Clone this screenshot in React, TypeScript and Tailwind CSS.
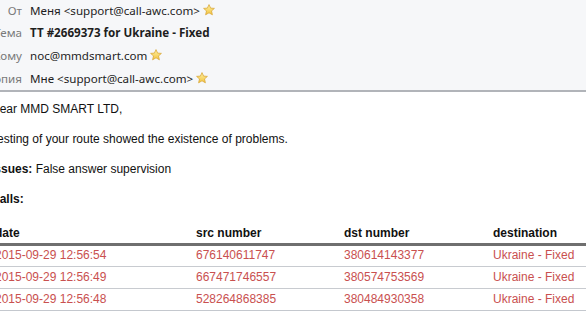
import React from "react";

/* ─── Star icon ──────────────────────────────────────────────────────── */

function Star() {
  return (
    <svg width="12" height="12" viewBox="0 0 12 12" className="ml-[3px] inline-block">
      <defs>
        <linearGradient id="sg" x1="0" y1="0" x2="0" y2="1">
          <stop offset="0" stopColor="#fff3a8" />
          <stop offset="1" stopColor="#f2c23a" />
        </linearGradient>
      </defs>
      <path
        d="M6 0.6 L7.6 4.1 L11.4 4.4 L8.5 6.9 L9.4 10.8 L6 8.8 L2.6 10.8 L3.5 6.9 L0.6 4.4 L4.4 4.1 Z"
        fill="url(#sg)"
        stroke="#d9a83a"
        strokeWidth="0.8"
        strokeLinejoin="round"
      />
    </svg>
  );
}

/* ─── Data ───────────────────────────────────────────────────────────── */

const headers = [
  { label: "От", value: "Меня <support@call-awc.com>", star: true, h: "h-[21px]" },
  { label: "Тема", value: "TT #2669373 for Ukraine - Fixed", bold: true, h: "h-[23px]" },
  { label: "Кому", value: "noc@mmdsmart.com", star: true, h: "h-[23px]" },
  { label: "Копия", value: "Мне <support@call-awc.com>", star: true, h: "h-[23px]" },
];

const calls = [
  ["2015-09-29 12:56:54", "676140611747", "380614143377", "Ukraine - Fixed"],
  ["2015-09-29 12:56:49", "667471746557", "380574753569", "Ukraine - Fixed"],
  ["2015-09-29 12:56:48", "528264868385", "380484930358", "Ukraine - Fixed"],
];

/* ─── Component ──────────────────────────────────────────────────────── */

export default function App() {
  return (
    <div className="h-[311px] w-[586px] overflow-hidden bg-white">
      {/* Message header */}
      <div
        className="border-b-2 border-[#b1b4b9] bg-[#f6f7f9] text-[11.6px] text-[#1e1e1e]"
        style={{ fontFamily: '"Noto Sans", "Open Sans", sans-serif' }}
      >
        {headers.map((h) => (
          <div key={h.label} className={`flex items-center ${h.h}`}>
            <span className="-ml-[40px] w-[62px] shrink-0 text-right text-[#7a7a7a]">{h.label}</span>
            <span className={`ml-[8px] flex items-center ${h.bold ? "font-bold" : ""}`}>
              {h.value}
              {h.star && <Star />}
            </span>
          </div>
        ))}
      </div>

      {/* Message body */}
      <div
        className="-ml-[9px] pt-[10px] text-[12px] leading-[15px] text-[#111]"
        style={{ fontFamily: '"Liberation Sans", Arial, sans-serif' }}
      >
        <p className="mb-[15px]">Dear MMD SMART LTD,</p>
        <p className="mb-[15px]">Testing of your route showed the existence of problems.</p>
        <p className="mb-[15px]">
          <b>Issues:</b> False answer supervision
        </p>
        <p className="mb-[14px] font-bold">Calls:</p>

        <table className="w-[640px] border-collapse border-b border-[#c4c8ce]">
          <thead>
            <tr className="border-b-[3px] border-[#6f6f6f]">
              <th className="h-[23px] w-[205px] pt-[4px] pl-[4px] text-left font-bold">date</th>
              <th className="w-[148px] pt-[4px] text-left font-bold">src number</th>
              <th className="w-[149px] pt-[4px] text-left font-bold">dst number</th>
              <th className="pt-[4px] text-left font-bold">destination</th>
            </tr>
          </thead>
          <tbody className="text-[#c9504f]">
            {calls.map((row, i) => (
              <tr key={i} className={i < calls.length - 1 ? "border-b border-[#c8cbd0]" : ""}>
                {row.map((cell, j) => (
                  <td key={j} className={`h-[22px] ${j === 0 ? "pl-[4px]" : ""}`}>
                    {cell}
                  </td>
                ))}
              </tr>
            ))}
          </tbody>
        </table>
        <div className="h-[10px] bg-[#eef2f8]" />
      </div>
    </div>
  );
}
